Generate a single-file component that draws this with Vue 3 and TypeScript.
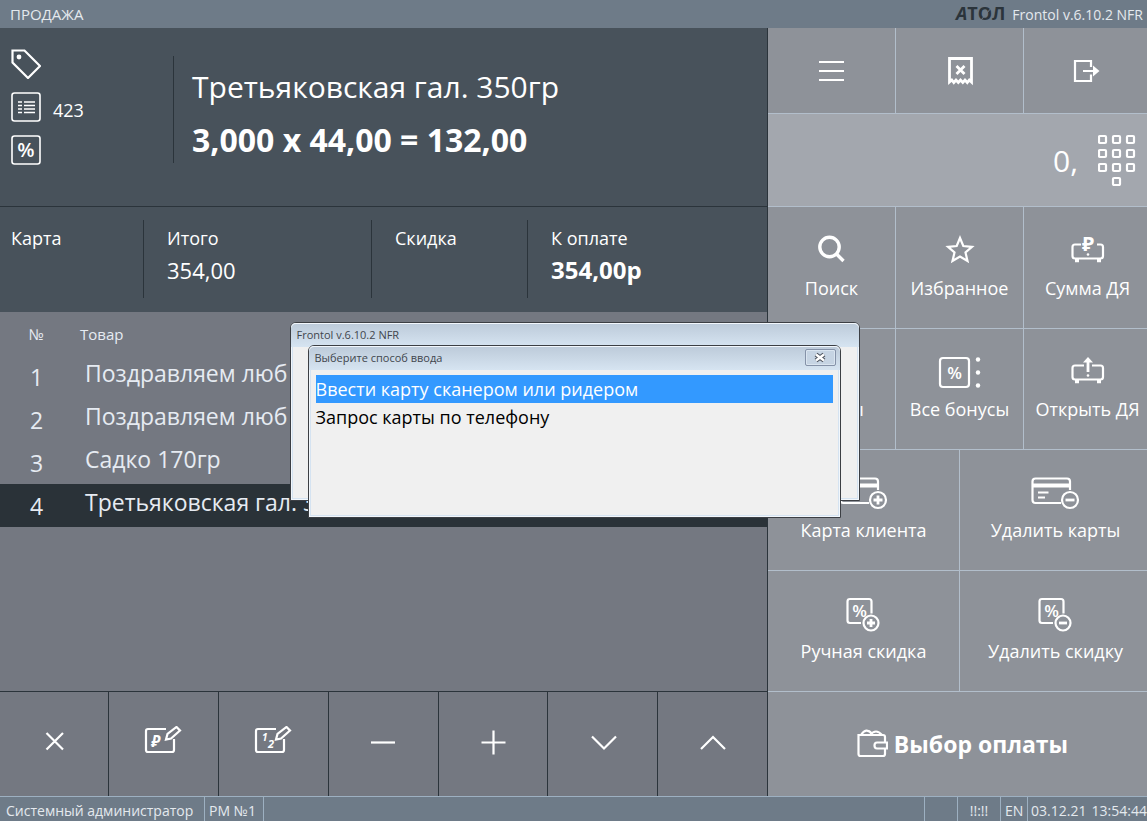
<script setup lang="ts">
import { ref } from 'vue'

interface Line { id: number; name: string }
interface Action { id: string; label: string; wide?: boolean }

const lines: Line[] = [
  { id: 1, name: 'Поздравляем люб' },
  { id: 2, name: 'Поздравляем люб' },
  { id: 3, name: 'Садко 170гр' },
  { id: 4, name: 'Третьяковская гал. 350гр' },
]
const selectedLine = ref(4)
const amount = ref('0,')

const actions: Action[] = [
  { id: 'search', label: 'Поиск' },
  { id: 'favorite', label: 'Избранное' },
  { id: 'cash-sum', label: 'Сумма ДЯ' },
  { id: 'bonus', label: 'Бонусы' },
  { id: 'all-bonus', label: 'Все бонусы' },
  { id: 'cash-open', label: 'Открыть ДЯ' },
  { id: 'card-add', label: 'Карта клиента', wide: true },
  { id: 'card-remove', label: 'Удалить карты', wide: true },
  { id: 'discount-add', label: 'Ручная скидка', wide: true },
  { id: 'discount-remove', label: 'Удалить скидку', wide: true },
]

const tools = [
  { id: 'delete', label: 'Удалить позицию' },
  { id: 'price', label: 'Изменить цену' },
  { id: 'quantity', label: 'Изменить количество' },
  { id: 'minus', label: 'Уменьшить' },
  { id: 'plus', label: 'Увеличить' },
  { id: 'down', label: 'Вниз' },
  { id: 'up', label: 'Вверх' },
]

const methods = ['Ввести карту сканером или ридером', 'Запрос карты по телефону']
const selectedMethod = ref(0)
</script>

<template>
  <div class="app">
    <header class="topbar">
      <span class="mode">ПРОДАЖА</span>
      <span class="brand">
        <svg class="logo" width="52" height="28" viewBox="0 0 52 28" aria-label="АТОЛ">
          <text x="1" y="20"><tspan font-style="italic">А</tspan>ТОЛ</text>
          <path d="M26 20L37 7" />
        </svg>
        <span>Frontol v.6.10.2 NFR</span>
      </span>
    </header>

    <main class="main">
      <section class="left">
        <div class="current">
          <div class="flags">
            <div class="flag">
              <svg class="ico" width="30" height="30" viewBox="0 0 30 30">
                <path d="M1.5 1.5H13.5L29 17L17 29L1.5 13.5Z" />
                <circle class="solid" cx="8" cy="8" r="2.4" />
              </svg>
            </div>
            <div class="flag">
              <svg class="ico thin" width="30" height="30" viewBox="0 0 30 30">
                <rect x="1" y="1" width="28" height="28" rx="2.5" />
                <path d="M7 10H11M13 10H24M7 13.5H11M13 13.5H24M7 17H11M13 17H24M7 20.5H11M13 20.5H24" />
              </svg>
              <span>423</span>
            </div>
            <div class="flag">
              <svg class="ico thin" width="30" height="30" viewBox="0 0 30 30">
                <rect x="1" y="1" width="28" height="28" rx="2.5" />
                <text x="15" y="22" font-size="20" font-weight="600" text-anchor="middle">%</text>
              </svg>
            </div>
          </div>
          <div class="item">
            <div class="item-name">Третьяковская гал. 350гр</div>
            <div class="item-sum">3,000 x 44,00 = 132,00</div>
          </div>
        </div>

        <div class="summary">
          <div class="cell"><span>Карта</span></div>
          <div class="cell"><span>Итого</span><span class="value">354,00</span></div>
          <div class="cell"><span>Скидка</span></div>
          <div class="cell"><span>К оплате</span><span class="value strong">354,00р</span></div>
        </div>

        <div class="receipt">
          <table>
            <thead>
              <tr><th class="num" scope="col">№</th><th scope="col">Товар</th></tr>
            </thead>
            <tbody>
              <tr v-for="l in lines" :key="l.id" :class="{ active: l.id === selectedLine }" @click="selectedLine = l.id">
                <td class="num">{{ l.id }}</td>
                <td class="name">{{ l.name }}</td>
              </tr>
            </tbody>
          </table>
        </div>

        <div class="tools">
          <button v-for="t in tools" :key="t.id" type="button" :aria-label="t.label">
            <svg class="ico" width="41" height="36" viewBox="0 0 41 36">
              <path v-if="t.id === 'delete'" d="M12.5 7L29 23.5M29 7L12.5 23.5" />
              <g v-else-if="t.id === 'price' || t.id === 'quantity'">
                <path d="M23 3H5Q3 3 3 5V24Q3 26 5 26H29Q31 26 31 24V13" />
                <path d="M23 13.5L24.5 8L33.5 1L37 4.5L28 12.5Z" />
                <text v-if="t.id === 'price'" x="8" y="21" font-size="16" font-weight="700" font-style="italic">₽</text>
                <template v-else>
                  <text x="9" y="15" font-size="10" font-weight="700" font-style="italic">1</text>
                  <text x="15" y="22" font-size="11" font-weight="700" font-style="italic">2</text>
                </template>
              </g>
              <path v-else-if="t.id === 'minus'" d="M8 16.5H32" />
              <path v-else-if="t.id === 'plus'" d="M8.5 16.5H32.5M20.5 4.5V28.5" />
              <path v-else-if="t.id === 'down'" d="M10 10.5L22 22.5L34 10.5" />
              <path v-else d="M9 23L21 11L33 23" />
            </svg>
          </button>
        </div>
      </section>

      <section class="right">
        <div class="pad">
          <button class="key third" type="button" aria-label="Меню">
            <svg class="ico" width="51" height="46" viewBox="0 0 51 46">
              <path d="M13 14H38M13 23H38M13 32H38" />
            </svg>
          </button>
          <button class="key third" type="button" aria-label="Закрыть чек">
            <svg class="ico" width="51" height="46" viewBox="0 0 51 46">
              <path class="bold" d="M15.5 34V10.5H37.5V34L35.3 32L33.3 34.5L31 32L28.8 34.5L26.5 32L24.3 34.5L22 32L19.8 34.5L17.8 32Z" />
              <path class="bold" d="M22.5 18L30.5 26M30.5 18L22.5 26" />
            </svg>
          </button>
          <button class="key third" type="button" aria-label="Выход">
            <svg class="ico" width="51" height="46" viewBox="0 0 51 46">
              <path d="M29 19V13H13V33H29V26.5M21 23H32" />
              <path class="solid" d="M31 17.5L37.5 23L31 28.5Z" />
            </svg>
          </button>

          <div class="entry">
            <input v-model="amount" type="text" aria-label="Количество" />
            <button type="button" aria-label="Цифровая клавиатура">
              <svg class="ico" width="38" height="52" viewBox="0 0 38 52">
                <template v-for="r in 3" :key="r">
                  <rect v-for="c in 3" :key="c" :x="c * 14 - 13" :y="r * 14 - 12" width="7" height="7" rx="1" />
                </template>
                <rect x="15" y="44" width="7" height="7" rx="1" />
              </svg>
            </button>
          </div>

          <button v-for="a in actions" :key="a.id" class="key" :class="a.wide ? 'half' : 'third'" type="button">
            <svg class="ico" width="51" height="46" viewBox="0 0 51 46">
              <g v-if="a.id === 'search'" class="heavy">
                <circle cx="23.5" cy="19" r="9.7" />
                <path d="M30.5 26L37.5 33" />
              </g>
              <path v-else-if="a.id === 'favorite'" d="M26 10L29.3 18L38 18.8L31.5 24.5L33.5 33L26 28.5L18.5 33L20.5 24.5L14 18.8L22.7 18Z" />
              <g v-else-if="a.id === 'cash-sum'">
                <path d="M19 16.500H13Q10.500 16.500 10.500 19V28Q10.500 30.500 13 30.500H38.500Q41 30.500 41 28V19Q41 16.500 38.500 16.500H35" />
                <path class="heavy" d="M13 32.500H17M35 32.500H39" />
                <text x="20" y="23" font-size="20" font-weight="700">₽</text>
                <circle class="solid" cx="26" cy="26.500" r="1.3" />
              </g>
              <g v-else-if="a.id === 'cash-open'">
                <path d="M22 16.500H13Q10.500 16.500 10.500 19V28Q10.500 30.500 13 30.500H38.500Q41 30.500 41 28V19Q41 16.500 38.500 16.500H30" />
                <path class="heavy" d="M13 32.500H17M35 32.500H39" />
                <path class="bold" d="M26 12V23" />
                <path class="solid" d="M21 13.500L26 8L31 13.500Z" />
                <circle class="solid" cx="26" cy="26.500" r="1.3" />
              </g>
              <g v-else-if="a.id === 'all-bonus' || a.id === 'bonus'">
                <rect x="6" y="9" width="29" height="29" rx="3" />
                <text x="20.500" y="30" font-size="17" font-weight="600" text-anchor="middle">%</text>
                <g v-if="a.id === 'all-bonus'" class="solid">
                  <circle cx="44" cy="10.500" r="2.2" />
                  <circle cx="44" cy="23.500" r="2.2" />
                  <circle cx="44" cy="36.500" r="2.2" />
                </g>
              </g>
              <g v-else-if="a.id.startsWith('card')">
                <path d="M31 33H5.500Q2.500 33 2.500 30V11.500Q2.500 8.500 5.500 8.500H37Q40 8.500 40 11.500V20" />
                <path class="stripe" d="M3 15.500H40" />
                <path d="M8 22.500H18.500M8 27.500H15" />
                <circle cx="40" cy="30" r="8" />
                <path class="bold" :d="a.id === 'card-add' ? 'M35.500 30H44.500M40 25.500V34.500' : 'M35.500 30H44.500'" />
              </g>
              <g v-else>
                <path d="M23 32H12Q9.500 32 9.500 29.500V10.500Q9.500 8 12 8H31Q33.500 8 33.500 10.500V22.500" />
                <text x="21.500" y="26" font-size="17" font-weight="600" text-anchor="middle">%</text>
                <circle class="badge" cx="33" cy="32" r="7.500" />
                <path class="bold" :d="a.id === 'discount-add' ? 'M29 32H37M33 28V36' : 'M29 32H37'" />
              </g>
            </svg>
            <span>{{ a.label }}</span>
          </button>

          <button class="key pay" type="button">
            <svg class="ico" width="31" height="30" viewBox="0 0 31 30">
              <path d="M28 13V8Q28 6 26 6H1.500V25Q1.500 27 3.500 27H26Q28 27 28 25V20" />
              <path d="M30 13.500H20Q17.500 13.500 17.500 16.500T20 19.500H30Z" />
              <path d="M4 6Q9 -2 15 4.500M13 6Q19 -1 25 6" />
            </svg>
            <span>Выбор оплаты</span>
          </button>
        </div>
      </section>
    </main>

    <footer class="status">
      <span class="seg user">Системный администратор</span>
      <span class="seg place">РМ №1</span>
      <span class="seg grow"></span>
      <span class="seg blank"></span>
      <span class="seg signal">!!:!!</span>
      <span class="seg lang">EN</span>
      <span class="seg clock"><span>03.12.21</span><span>13:54:44</span></span>
    </footer>

    <div class="window outer">
      <div class="title">Frontol v.6.10.2 NFR</div>
      <div class="window inner" role="dialog" aria-labelledby="dlg-title">
        <div class="title">
          <span id="dlg-title">Выберите способ ввода</span>
          <button class="close" type="button" aria-label="Закрыть">
            <svg width="14" height="11" viewBox="0 0 14 11">
              <path class="edge" d="M3 2.500L11 8.500M11 2.500L3 8.500" />
              <path class="core" d="M3 2.500L11 8.500M11 2.500L3 8.500" />
            </svg>
          </button>
        </div>
        <div class="options">
          <button v-for="(m, i) in methods" :key="m" type="button" :class="{ chosen: i === selectedMethod }" @click="selectedMethod = i">{{ m }}</button>
        </div>
      </div>
    </div>
  </div>
</template>

<style>
body {
  margin: 0;
}
</style>

<style scoped>
.app {
  position: relative;
  display: flex;
  flex-direction: column;
  min-height: 100vh;
  overflow: hidden;
  font-family: "Open Sans", "Noto Sans", sans-serif;
  font-size: 18px;
  color: #fff;
  background: #747881;
}
.app * {
  box-sizing: border-box;
}
button,
input {
  margin: 0;
  padding: 0;
  border: 0;
  border-radius: 0;
  background: none;
  color: inherit;
  font: inherit;
}
.topbar {
  display: flex;
  justify-content: space-between;
  align-items: center;
  height: 28px;
  padding: 0 4px 0 10px;
  background: #6e7b88;
  color: #e4e9ee;
  font-size: 14px;
}
.mode {
  font-size: 15px;
}
.brand {
  display: flex;
  align-items: center;
  gap: 5px;
}
.logo {
  overflow: visible;
}
.logo text {
  fill: #2b343b;
  font-size: 18px;
  font-weight: 700;
}
.logo path {
  stroke: #6e7b88;
  stroke-width: 1;
}
.main {
  flex: 1;
  display: grid;
  grid-template-columns: minmax(0, 768fr) minmax(0, 379fr);
}
.left {
  display: grid;
  grid-template-rows: 179fr 105fr 380fr 104fr;
  border-right: 1px solid #2b343b;
}
.current {
  display: flex;
  padding: 21px 0 22px 11px;
  background: #48525b;
  border-bottom: 1px solid #2b343b;
}
.flags {
  display: flex;
  flex-direction: column;
  gap: 13px;
  width: 162px;
}
.flag {
  display: flex;
  align-items: center;
  gap: 12px;
  height: 30px;
}
.flag span {
  padding-top: 6px;
}
.item {
  display: flex;
  flex-direction: column;
  gap: 10px;
  margin: 7px 0 21px;
  padding: 10px 0 0 18px;
  border-left: 1px solid #2b343b;
}
.item-name {
  font-size: 30px;
  line-height: 42px;
}
.item-sum {
  font-size: 32px;
  line-height: 44px;
  font-weight: 700;
}
.summary {
  display: grid;
  grid-template-columns: 144fr 228fr 156fr 239fr;
  padding: 13px 0 14px;
  background: #48525b;
}
.cell {
  display: flex;
  flex-direction: column;
  padding: 2px 0 0 23px;
  line-height: 32px;
  border-right: 1px solid #2b343b;
}
.cell:first-child {
  padding-left: 11px;
}
.cell:last-child {
  border-right: 0;
}
.value {
  font-size: 22px;
}
.strong {
  font-size: 24px;
  font-weight: 700;
}
.receipt {
  background: #747881;
  color: #e6ebf2;
  border-bottom: 1px solid #2b343b;
}
table {
  width: 100%;
  border-collapse: collapse;
  table-layout: fixed;
}
tr {
  height: 43px;
}
th,
td {
  padding: 0;
  text-align: left;
  vertical-align: middle;
}
th {
  padding: 0 0 0 7px;
  font-size: 15px;
  font-weight: 400;
}
.num {
  width: 73px;
  padding: 0;
  text-align: center;
}
td {
  font-size: 23px;
  line-height: 32px;
}
td.name {
  padding: 0 0 8px 12px;
}
.active {
  background: #2a3238;
}
.tools {
  display: grid;
  grid-template-columns: 109fr 110fr 110fr 110fr 109fr 110fr 109fr;
}
.tools button {
  display: flex;
  align-items: center;
  justify-content: center;
  border-right: 1px solid #2b343b;
}
.tools button:last-child {
  border-right: 0;
}
.right {
  overflow: hidden;
  background: #8e9299;
}
.pad {
  display: grid;
  grid-template-columns: repeat(6, minmax(0, 1fr));
  grid-template-rows: 86fr 93fr 122fr 121fr 121fr 121fr 104fr;
  width: calc(100% + 5px);
  height: 100%;
}
.key {
  display: flex;
  flex-direction: column;
  align-items: center;
  justify-content: center;
  border-right: 1px solid #b2becb;
  border-bottom: 1px solid #b2becb;
  line-height: 28px;
}
.third {
  grid-column: span 2;
}
.half {
  grid-column: span 3;
}
.key span {
  padding-bottom: 6px;
}
.entry {
  grid-column: 1 / -1;
  display: flex;
  align-items: center;
  justify-content: flex-end;
  gap: 20px;
  padding-right: 16px;
  background: #a3a7ae;
  border-bottom: 1px solid #b2becb;
}
.entry input {
  flex: 1;
  min-width: 0;
  text-align: right;
  font-size: 30px;
}
.entry button {
  display: flex;
}
.pay {
  grid-column: 1 / -1;
  flex-direction: row;
  gap: 6px;
  padding-left: 6px;
  border-bottom: 0;
  font-size: 23px;
  font-weight: 700;
}
.key.pay span {
  padding: 0;
}
.ico {
  display: block;
  flex: none;
  fill: none;
  stroke: #fff;
  stroke-width: 2.2;
}
.thin {
  stroke-width: 1.6;
}
.ico text {
  fill: #fff;
  stroke: none;
}
.solid {
  fill: #fff;
  stroke: none;
}
.bold {
  stroke-width: 2.8;
}
.heavy {
  stroke-width: 3.4;
}
.stripe {
  stroke-width: 4;
}
.badge {
  fill: #8e9299;
}
.status {
  display: flex;
  height: 25px;
  border-top: 1px solid #9db0c1;
  background: #6e7b88;
  color: #e4e9ee;
  font-size: 14px;
  line-height: 27px;
  white-space: nowrap;
}
.seg {
  padding: 0 4px;
  border-right: 1px solid #9db0c1;
}
.user {
  width: 205px;
  padding-left: 6px;
}
.place {
  width: 59px;
}
.grow {
  flex: 1;
}
.blank {
  width: 33px;
}
.signal {
  width: 43px;
  text-align: center;
}
.lang {
  width: 27px;
}
.clock {
  display: flex;
  justify-content: space-between;
  width: 119px;
  padding: 0 0 0 3px;
  border-right: 0;
}
.window {
  position: absolute;
  border: 1px solid #3c3f44;
  border-radius: 6px 6px 0 0;
  background: #f0f0f0;
  box-shadow: inset 0 0 0 1px #f2f7fc, inset 0 0 0 2px #d5e3f1;
}
.outer {
  top: calc(50% - 89px);
  left: calc(50% - 284px);
  width: 570px;
  height: 179px;
}
.inner {
  top: 22px;
  left: 17px;
  width: 533px;
  height: 173px;
}
.title {
  display: flex;
  align-items: center;
  justify-content: space-between;
  height: 24px;
  padding: 0 4px 0 6px;
  border-radius: 5px 5px 0 0;
  background: linear-gradient(#bccad9, #d6e4f1);
  box-shadow: inset 0 1px 0 #f2f7fc;
  color: #41464d;
  font-size: 11px;
}
.close {
  display: flex;
  align-items: center;
  justify-content: center;
  width: 31px;
  height: 17px;
  border: 1px solid #8592a8;
  border-radius: 2px;
  background: #c6d4e3;
  box-shadow: inset 0 0 0 1px #dae5f0;
}
.close path {
  fill: none;
}
.edge {
  stroke: #4a505a;
  stroke-width: 4.5;
}
.core {
  stroke: #fff;
  stroke-width: 2.4;
}
.options {
  display: flex;
  flex-direction: column;
  padding: 5px 7px;
}
.options button {
  height: 28px;
  text-align: left;
  color: #000;
  line-height: 28px;
}
.options .chosen {
  background: #3399ff;
  color: #fff;
}
</style>
